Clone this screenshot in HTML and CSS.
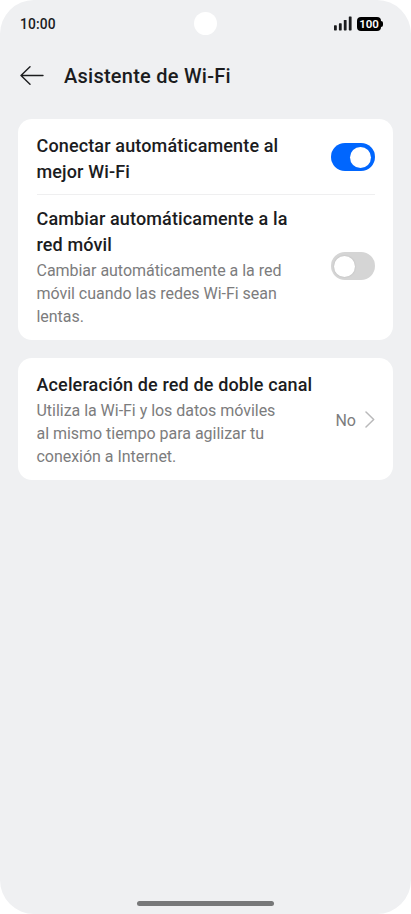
FILE: index.html
```
<!DOCTYPE html>
<html lang="es">
<head>
<meta charset="utf-8">
<meta name="viewport" content="width=device-width, initial-scale=1">
<title>Asistente de Wi-Fi</title>
<link rel="stylesheet" href="styles.css">
</head>
<body>
<div class="screen">
  <div class="status">
    <span class="time">10:00</span>
    <span class="camera"></span>
    <div class="indicators">
      <svg class="signal" width="18" height="15" viewBox="0 0 18 15" fill="#1b1c1e">
        <rect x="0" y="9.3" width="2.8" height="5.1" rx=".6"/>
        <rect x="4.9" y="7.3" width="2.8" height="7.1" rx=".6"/>
        <rect x="9.8" y="4" width="2.8" height="10.4" rx=".6"/>
        <rect x="14.8" y=".5" width="2.8" height="13.9" rx=".6"/>
      </svg>
      <span class="battery">100</span>
    </div>
  </div>
  <header class="header">
    <svg width="24" height="20" viewBox="0 0 24 20" fill="none" stroke="#1b1c1e" stroke-width="1.4" stroke-linecap="round" stroke-linejoin="round"><path d="M23 9.5H1M10 .8 1 9.5l9 8.7"/></svg>
    <h1>Asistente de Wi-Fi</h1>
  </header>
  <main class="cards">
    <section class="card">
      <div class="row first">
        <div class="text"><h2>Conectar automáticamente al<br>mejor Wi-Fi</h2></div>
        <span class="toggle on"></span>
      </div>
      <div class="row second">
        <div class="text">
          <h2>Cambiar automáticamente a la<br>red móvil</h2>
          <p>Cambiar automáticamente a la red<br>móvil cuando las redes Wi-Fi sean<br>lentas.</p>
        </div>
        <span class="toggle"></span>
      </div>
    </section>
    <section class="card">
      <div class="row third">
        <div class="text">
          <h2>Aceleración de red de doble canal</h2>
          <p>Utiliza la Wi-Fi y los datos móviles<br>al mismo tiempo para agilizar tu<br>conexión a Internet.</p>
        </div>
        <div class="value">
          <span>No</span>
          <svg width="10" height="17" viewBox="0 0 10 17" fill="none" stroke="#b9b9ba" stroke-width="1.5" stroke-linecap="round" stroke-linejoin="round"><path d="M1 1l7.7 7.5L1 16"/></svg>
        </div>
      </div>
    </section>
  </main>
  <div class="home"></div>
</div>
</body>
</html>
```
FILE: styles.css
```
* { box-sizing: border-box; }
body {
  margin: 0;
  background: #fff;
  color: #1b1c1e;
  font-family: Roboto, "Liberation Sans", sans-serif;
}
h1, h2, p { margin: 0; white-space: nowrap; }
.screen {
  display: flex;
  flex-direction: column;
  height: 914px;
  background: #eff0f2;
  border-radius: 34px;
  overflow: hidden;
}
.status {
  display: grid;
  grid-template-columns: 174px 23px 1fr;
  align-items: center;
  height: 47px;
  padding: 0 30px 0 20px;
}
.time { font-size: 13.8px; font-weight: 500; letter-spacing: .15px; }
.camera { width: 23px; height: 23px; border-radius: 50%; background: #fff; }
.indicators { display: flex; justify-content: flex-end; align-items: center; gap: 5.5px; }
.battery {
  position: relative;
  width: 24px;
  height: 14px;
  border-radius: 4px;
  background: #000;
  color: #fff;
  font-size: 11.5px;
  font-weight: 600;
  line-height: 15px;
  text-align: center;
}
.battery::after {
  content: "";
  position: absolute;
  left: 23px;
  top: 4px;
  width: 2.5px;
  height: 6px;
  border-radius: 0 2px 2px 0;
  background: #000;
}
.header {
  display: flex;
  align-items: center;
  gap: 20px;
  height: 58px;
  padding-left: 20px;
}
.header h1 { font-size: 20px; font-weight: 500; line-height: 28px; letter-spacing: .25px; }
.cards { display: flex; flex-direction: column; gap: 18px; padding: 14px 18px 0; }
.card { padding: 0 18.5px; border-radius: 14px; background: #fff; }
.row { display: flex; align-items: center; justify-content: space-between; }
.first { height: 76px; padding-top: 4px; border-bottom: 1px solid #efeff0; }
.first .toggle { margin-top: -3px; }
.second { height: 145px; }
.second .text { margin-top: -1px; }
.second p { padding-top: 2px; }
.second .toggle { margin-top: -3px; }
.third { height: 122px; }
.third .text { padding-top: 2px; }
h2 { font-size: 18px; font-weight: 500; line-height: 25.5px; letter-spacing: .14px; }
p { padding-top: 1px; color: #7c7c7d; font-size: 16px; line-height: 23px; letter-spacing: -.03px; }
.toggle {
  display: flex;
  align-items: center;
  width: 44px;
  height: 28px;
  padding: 0 3.5px;
  border-radius: 14px;
  background: #d5d5d5;
}
.toggle::before {
  content: "";
  width: 21px;
  height: 21px;
  border-radius: 50%;
  background: #fff;
  box-shadow: 0 0 2px rgba(0, 0, 0, .15);
}
.toggle.on { justify-content: flex-end; background: #0066fe; }
.toggle.on::before { box-shadow: none; }
.value { display: flex; align-items: center; gap: 8.5px; color: #7c7c7d; font-size: 16px; }
.value span { padding-top: 2px; }
.home {
  width: 137px;
  height: 5px;
  margin: auto auto 8px;
  border-radius: 3px;
  background: #777879;
}
```
